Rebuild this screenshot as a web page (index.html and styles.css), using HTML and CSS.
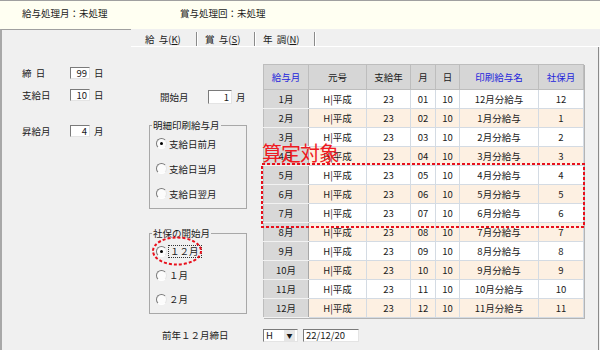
FILE: index.html
```html
<!DOCTYPE html>
<html lang="ja">
<head>
    <meta charset="UTF-8">
    <title>給与設定</title>
    <link rel="stylesheet" href="styles.css">
</head>
<body>

    <div class="topbar">
        <span class="status">給与処理月：未処理</span>
        <span class="status">賞与処理回：未処理</span>
    </div>

    <div class="main">
        <div class="side">
            <div class="field">
                <span class="lbl">締&nbsp;&nbsp;日</span>
                <span class="box">99</span>
                <span class="unit">日</span>
            </div>
            <div class="field">
                <span class="lbl">支給日</span>
                <span class="box">10</span>
                <span class="unit">日</span>
            </div>
            <div class="field far">
                <span class="lbl">昇給月</span>
                <span class="box">4</span>
                <span class="unit">月</span>
            </div>
        </div>

        <div class="work">
            <div class="tabs">
                <div class="tab tab-1">給&nbsp;&nbsp;与(<u>K</u>)</div>
                <div class="tab tab-2">賞&nbsp;&nbsp;与(<u>S</u>)</div>
                <div class="tab tab-3">年&nbsp;&nbsp;調(<u>N</u>)</div>
            </div>

            <div class="pane">
                <div class="upper">
                    <div class="mid">
                        <div class="open-row">
                            <span class="lbl">開始月</span>
                            <span class="box wide">1</span>
                            <span class="unit">月</span>
                        </div>

                        <fieldset class="group group-print">
                            <legend>明細印刷給与月</legend>
                            <div class="opt"><span class="radio on"></span>支給日前月</div>
                            <div class="opt"><span class="radio"></span>支給日当月</div>
                            <div class="opt"><span class="radio"></span>支給日翌月</div>
                        </fieldset>

                        <fieldset class="group group-shaho">
                            <legend>社保の開始月</legend>
                            <div class="opt"><span class="radio on"></span><span class="focus">１２月</span></div>
                            <div class="opt"><span class="radio"></span>１月</div>
                            <div class="opt"><span class="radio"></span>２月</div>
                        </fieldset>

                        <svg class="mark-ellipse" width="52" height="30" viewBox="0 0 52 30">
                            <ellipse cx="26" cy="15" rx="24" ry="13.5" fill="none" stroke="#e8101c" stroke-width="2" stroke-dasharray="3 2"/>
                        </svg>
                    </div>

                    <div class="table-wrap">
                        <table class="grid">
                            <colgroup>
                                <col style="width:45px">
                                <col style="width:58px">
                                <col style="width:44px">
                                <col style="width:25px">
                                <col style="width:24px">
                                <col style="width:79px">
                                <col style="width:45px">
                            </colgroup>
                            <thead>
                                <tr>
                                    <th class="blue">給与月</th>
                                    <th>元号</th>
                                    <th>支給年</th>
                                    <th>月</th>
                                    <th>日</th>
                                    <th class="blue">印刷給与名</th>
                                    <th class="blue">社保月</th>
                                </tr>
                            </thead>
                            <tbody>
                                <tr><td class="mon">1月</td><td>H|平成</td><td>23</td><td>01</td><td>10</td><td>12月分給与</td><td>12</td></tr>
                                <tr class="alt"><td class="mon">2月</td><td>H|平成</td><td>23</td><td>02</td><td>10</td><td>1月分給与</td><td>1</td></tr>
                                <tr><td class="mon">3月</td><td>H|平成</td><td>23</td><td>03</td><td>10</td><td>2月分給与</td><td>2</td></tr>
                                <tr class="alt"><td class="mon">4月</td><td>H|平成</td><td>23</td><td>04</td><td>10</td><td>3月分給与</td><td>3</td></tr>
                                <tr><td class="mon">5月</td><td>H|平成</td><td>23</td><td>05</td><td>10</td><td>4月分給与</td><td>4</td></tr>
                                <tr class="alt"><td class="mon">6月</td><td>H|平成</td><td>23</td><td>06</td><td>10</td><td>5月分給与</td><td>5</td></tr>
                                <tr><td class="mon">7月</td><td>H|平成</td><td>23</td><td>07</td><td>10</td><td>6月分給与</td><td>6</td></tr>
                                <tr class="alt"><td class="mon">8月</td><td>H|平成</td><td>23</td><td>08</td><td>10</td><td>7月分給与</td><td>7</td></tr>
                                <tr><td class="mon">9月</td><td>H|平成</td><td>23</td><td>09</td><td>10</td><td>8月分給与</td><td>8</td></tr>
                                <tr class="alt"><td class="mon">10月</td><td>H|平成</td><td>23</td><td>10</td><td>10</td><td>9月分給与</td><td>9</td></tr>
                                <tr><td class="mon">11月</td><td>H|平成</td><td>23</td><td>11</td><td>10</td><td>10月分給与</td><td>10</td></tr>
                                <tr class="alt"><td class="mon">12月</td><td>H|平成</td><td>23</td><td>12</td><td>10</td><td>11月分給与</td><td>11</td></tr>
                            </tbody>
                        </table>

                        <div class="calc-label">算定対象</div>
                        <svg class="mark-rect" width="326" height="66" viewBox="0 0 326 66">
                            <rect x="1" y="1" width="322" height="63" fill="none" stroke="#e8101c" stroke-width="2" stroke-dasharray="3 2"/>
                        </svg>
                    </div>
                </div>

                <div class="foot">
                    <span class="lbl">前年１２月締日</span>
                    <span class="select"><span class="sel-val">H</span><span class="sel-btn">&#9660;</span></span>
                    <span class="date">22/12/20</span>
                </div>
            </div>
        </div>
    </div>

</body>
</html>
```

FILE: styles.css
```css
* {
    box-sizing: border-box;
}
body {
    margin: 0;
    width: 600px;
    height: 350px;
    overflow: hidden;
    background-color: #f0f0f0;
    font-family: "Noto Sans CJK JP", sans-serif;
    font-size: 9.5px;
    line-height: 12px;
    color: #1a1a1a;
}

/* top status strip */
.topbar {
    height: 29px;
    border-top: 1px solid #a0a0a0;
    background-color: #fffff2;
    display: flex;
    align-items: center;
    padding: 0 0 4px 22px;
}
.status {
    width: 158px;
}

.main {
    display: flex;
    height: 321px;
}

/* left settings */
.side {
    width: 131px;
    border-top: 1px solid #a0a0a0;
    border-left: 2px solid #a8a8a8;
    padding: 37px 0 0 20px;
}
.field {
    display: flex;
    align-items: center;
    height: 12px;
    margin-bottom: 10px;
}
.field.far {
    margin-top: 24px;
}
.field .lbl {
    width: 48px;
}
.box {
    width: 20px;
    height: 12px;
    background-color: #fff;
    border-top: 1px solid #7a7a7a;
    border-left: 1px solid #7a7a7a;
    border-right: 1px solid #e4e4e4;
    border-bottom: 1px solid #e4e4e4;
    text-align: right;
    padding-right: 2px;
    line-height: 10px;
}
.box.wide {
    width: 24px;
    height: 14px;
    line-height: 12px;
}
.unit {
    margin-left: 4px;
}

/* tab area */
.work {
    flex: 1;
    display: flex;
    flex-direction: column;
}
.tabs {
    height: 18px;
    border-bottom: 1px solid #fff;
    display: flex;
    padding: 3px 0 0 6px;
}
.tab {
    height: 14px;
    line-height: 14px;
    border-right: 1px solid #8a8a8a;
    box-shadow: 1px 0 0 #fff;
    margin-right: 1px;
}
.tab-1 { width: 60px; padding-left: 8px; }
.tab-2 { width: 57px; padding-left: 7px; }
.tab-3 { width: 59px; padding-left: 7px; }

.pane {
    flex: 1;
    margin-right: 1px;
    border-right: 1px solid #8a8a8a;
    display: flex;
    flex-direction: column;
}
.upper {
    display: flex;
}

/* middle column */
.mid {
    width: 132px;
    position: relative;
    padding-left: 18px;
}
.open-row {
    display: flex;
    align-items: center;
    height: 14px;
    margin-top: 43px;
    padding-left: 11px;
}
.open-row .lbl {
    width: 48px;
}
.group {
    width: 98px;
    margin: 15px 0 0;
    padding: 0 0 2px 2px;
    border: 1px solid #a8a8a8;
    min-width: 0;
}
.group legend {
    padding: 0 1px;
    line-height: 12px;
}
.group-shaho {
    margin-top: 18px;
}
.opt {
    display: flex;
    align-items: center;
    height: 25px;
    padding-left: 4px;
}
.group-shaho .opt {
    height: 24px;
}
.radio {
    width: 11px;
    height: 11px;
    border-radius: 50%;
    border: 1px solid;
    border-color: #7a7a7a #e6e6e6 #fff #7a7a7a;
    background-color: #fcfcfc;
    margin-right: 2px;
    display: flex;
    align-items: center;
    justify-content: center;
}
.radio.on::after {
    content: "";
    width: 3px;
    height: 3px;
    border-radius: 50%;
    background-color: #000;
}
.focus {
    outline: 1px dotted #333;
    padding: 0 2px 0 1px;
    line-height: 11px;
}
.mark-ellipse {
    position: absolute;
    left: 20px;
    top: 189px;
}

/* salary table */
.table-wrap {
    position: relative;
    margin-top: 17px;
}
.grid {
    width: 320px;
    border-collapse: collapse;
    table-layout: fixed;
    border: 1px solid #8a8a8a;
    box-shadow: 1px 1px 0 #b4b4b4;
}
.grid th {
    height: 25px;
    padding: 0;
    background-color: #d6d6d6;
    font-weight: normal;
    border: 1px solid #bdbdbd;
}
.grid th.blue {
    color: #2424dc;
}
.grid td {
    height: 19px;
    padding: 0;
    text-align: center;
    background-color: #fff;
    border: 1px solid #d4dbe3;
}
.grid tr.alt td {
    background-color: #fdf0e2;
}
.grid td.mon,
.grid tr.alt td.mon {
    background-color: #d8d8d8;
    border-color: #f2f2f2 #a8a8a8 #f2f2f2 #bdbdbd;
}
.calc-label {
    position: absolute;
    left: -1px;
    top: 78px;
    font-size: 20px;
    line-height: 22px;
    letter-spacing: -1px;
    color: #ee1a22;
}
.mark-rect {
    position: absolute;
    left: -2px;
    top: 99px;
}

/* bottom row */
.foot {
    display: flex;
    align-items: center;
    height: 14px;
    margin-top: 10px;
}
.foot .lbl {
    width: 132px;
    padding-left: 31px;
}
.select {
    width: 35px;
    height: 13px;
    background-color: #fff;
    border-top: 1px solid #7a7a7a;
    border-left: 1px solid #7a7a7a;
    border-right: 1px solid #e4e4e4;
    border-bottom: 1px solid #e4e4e4;
    display: flex;
    align-items: center;
}
.sel-val {
    flex: 1;
    padding-left: 2px;
    line-height: 11px;
}
.sel-btn {
    width: 11px;
    height: 11px;
    margin-right: 2px;
    background-color: #e6e6e6;
    font-size: 6px;
    line-height: 11px;
    text-align: center;
}
.date {
    width: 56px;
    height: 13px;
    margin-left: 5px;
    background-color: #fff;
    border-top: 1px solid #7a7a7a;
    border-left: 1px solid #7a7a7a;
    border-right: 1px solid #e4e4e4;
    border-bottom: 1px solid #e4e4e4;
    padding-left: 2px;
    line-height: 11px;
}
```
